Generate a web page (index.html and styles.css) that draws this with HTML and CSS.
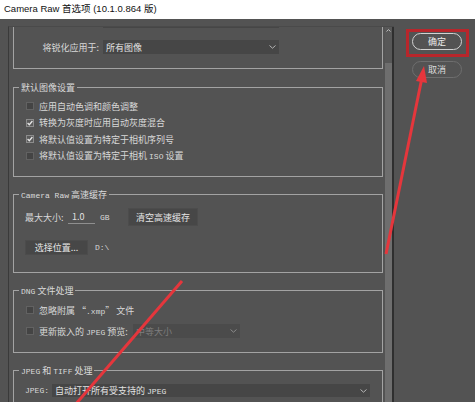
FILE: index.html
```html
<!DOCTYPE html>
<html lang="zh-CN">
<head>
<meta charset="utf-8">
<title>Camera Raw 首选项</title>
<link rel="stylesheet" href="styles.css">
</head>
<body>
<div class="app">
  <div class="titlebar">Camera Raw 首选项 (10.1.0.864 版)</div>
  <div class="window">
    <div class="panel">
      <div class="viewport">
        <div class="content">
          <div class="group g1">
            <div class="frow">
              <span class="flabel">将图像设置存储在:</span>
              <div class="select w176"><span>附属 “<span class="m">.xmp</span>” 文件</span><svg class="chev" width="7" height="4" viewBox="0 0 7 4"><path d="M0.5 0.5 L3.5 3.2 L6.5 0.5"/></svg></div>
            </div>
            <div class="frow gap12">
              <span class="flabel">将锐化应用于:</span>
              <div class="select w176"><span>所有图像</span><svg class="chev" width="7" height="4" viewBox="0 0 7 4"><path d="M0.5 0.5 L3.5 3.2 L6.5 0.5"/></svg></div>
            </div>
          </div>

          <fieldset class="group fs">
            <legend>默认图像设置</legend>
            <div class="checks">
              <div class="check"><span class="box"></span><span>应用自动色调和颜色调整</span></div>
              <div class="check"><span class="box on"><svg width="6" height="6" viewBox="0 0 6 6"><path d="M0.6 3 L2.3 4.7 L5.4 1"/></svg></span><span>转换为灰度时应用自动灰度混合</span></div>
              <div class="check"><span class="box on"><svg width="6" height="6" viewBox="0 0 6 6"><path d="M0.6 3 L2.3 4.7 L5.4 1"/></svg></span><span>将默认值设置为特定于相机序列号</span></div>
              <div class="check"><span class="box"></span><span>将默认值设置为特定于相机 <span class="m">ISO</span> 设置</span></div>
            </div>
          </fieldset>

          <fieldset class="group fs">
            <legend><span class="m">Camera Raw</span> 高速缓存</legend>
            <div class="cache">
              <div class="crow">
                <span class="clabel">最大大小:</span>
                <span class="input">1.0</span>
                <span class="unit m">GB</span>
                <span class="pbtn w70">清空高速缓存</span>
              </div>
              <div class="crow second">
                <span class="pbtn w63">选择位置...</span>
                <span class="path m">D:\</span>
              </div>
            </div>
          </fieldset>

          <fieldset class="group fs">
            <legend><span class="m">DNG</span> 文件处理</legend>
            <div class="dng">
              <div class="check r16"><span class="box"></span><span>忽略附属 “<span class="m">.xmp</span>” 文件</span></div>
              <div class="check r16 gap5"><span class="box"></span><span class="dlabel">更新嵌入的 <span class="m">JPEG</span> 预览:</span>
                <div class="select w107 disabled"><span>中等大小</span><svg class="chev" width="7" height="4" viewBox="0 0 7 4"><path d="M0.5 0.5 L3.5 3.2 L6.5 0.5"/></svg></div>
              </div>
            </div>
          </fieldset>

          <fieldset class="group fs">
            <legend><span class="m">JPEG</span> 和 <span class="m">TIFF</span> 处理</legend>
            <div class="jpeg">
              <div class="jrow">
                <span class="jlabel m">JPEG:</span>
                <div class="select w318 short"><span>自动打开所有受支持的 <span class="m">JPEG</span></span><svg class="chev" width="7" height="4" viewBox="0 0 7 4"><path d="M0.5 0.5 L3.5 3.2 L6.5 0.5"/></svg></div>
              </div>
            </div>
          </fieldset>
        </div>
      </div>
      <div class="scrollbar">
        <div class="sb-up"><svg width="5" height="3" viewBox="0 0 5 3"><path d="M0.5 2.5 L2.5 0.6 L4.5 2.5"/></svg></div>
        <div class="sb-thumb"></div>
      </div>
    </div>
    <div class="side">
      <button class="btn primary">确定</button>
      <button class="btn secondary">取消</button>
    </div>
  </div>
  <svg class="annot" width="475" height="402" viewBox="0 0 475 402">
    <rect x="407.5" y="30.5" width="60" height="25" fill="none" stroke="#b8262b" stroke-width="3"/>
    <line x1="386" y1="254" x2="421.5" y2="80" stroke="#e5363c" stroke-width="3"/>
    <polygon points="424,66 416,81 427,83" fill="#e5363c"/>
    <line x1="75" y1="405" x2="182" y2="281" stroke="#e5363c" stroke-width="3"/>
  </svg>
</div>
</body>
</html>
```

FILE: styles.css
```css
* { box-sizing: border-box; }

body {
  margin: 0;
  background: #ffffff;
  font-family: "Noto Sans CJK SC", sans-serif;
}

.app {
  position: relative;
  width: 475px;
  height: 402px;
  overflow: hidden;
}

.titlebar {
  height: 19px;
  padding-left: 4px;
  background: #ffffff;
  color: #111111;
  font-family: "Liberation Sans", "Noto Sans CJK SC", sans-serif;
  font-size: 9.5px;
  line-height: 17px;
  white-space: nowrap;
}

.window {
  display: flex;
  height: 383px;
  background: #535353;
}

.panel {
  display: flex;
  margin: 7px 0 0 8px;
  border-left: 1px solid #3a3a3a;
  border-top: 1px solid #4a4a4a;
  height: 376px;
}

.viewport {
  width: 376px;
  height: 100%;
  overflow: hidden;
  color: #d8d8d8;
  font-size: 9px;
}

.content {
  padding: 0 2px 0 4px;
}

.m {
  font-family: "Liberation Mono", monospace;
  font-size: 8px;
}

.group {
  border: 1px solid #a3a3a3;
}

/* first group, scrolled partly out of view */
.g1 {
  margin-top: -20px;
  padding: 6px 0 14px;
}

.frow {
  display: flex;
  align-items: center;
  height: 14px;
}

.frow.gap12 { margin-top: 12px; }

.flabel {
  width: 85px;
  margin-right: 4px;
  text-align: right;
  white-space: nowrap;
}

.select {
  display: flex;
  align-items: center;
  justify-content: space-between;
  height: 14px;
  padding: 0 3px 0 3px;
  background: #464646;
  color: #e2e2e2;
  white-space: nowrap;
}

.select.w176 { width: 176px; }
.select.w107 { width: 107px; }
.select.w318 { width: 318px; }
.select.short { height: 13px; }
.select.disabled { background: #4b4b4b; color: #7d7d7d; }

.chev path {
  fill: none;
  stroke: #b5b5b5;
  stroke-width: 1;
}

.select.disabled .chev path { stroke: #8a8a8a; }

/* fieldsets */
.fs {
  margin: 12px 0 0;
  padding: 0;
  min-width: 0;
}

.fs legend {
  margin-left: 5px;
  padding: 0 2px;
  height: 13px;
  line-height: 13px;
  font-size: 9px;
  color: #dadada;
  white-space: nowrap;
}

.fs + .fs { margin-top: 11px; }

.checks {
  padding: 4px 0 12px 12px;
}

.check {
  display: flex;
  align-items: center;
  gap: 5px;
  height: 16.5px;
  white-space: nowrap;
}

.check.r16 { height: 16px; }
.check.gap5 { margin-top: 5px; }

.box {
  display: flex;
  align-items: center;
  justify-content: center;
  flex: none;
  width: 8px;
  height: 8px;
  border: 1px solid #626262;
  background: #444444;
}

.box.on {
  background: #5a5a5a;
  border-color: #8c8c8c;
}

.box svg path {
  fill: none;
  stroke: #e8e8e8;
  stroke-width: 1.3;
}

/* cache group */
.cache {
  padding: 7px 0 17px 11px;
}

.crow {
  display: flex;
  align-items: center;
  height: 18px;
  white-space: nowrap;
}

.crow.second {
  height: 15px;
  margin-top: 14px;
}

.clabel { width: 43px; }

.input {
  width: 27px;
  height: 13px;
  padding-left: 4px;
  line-height: 12px;
  border-bottom: 1px solid #8f8f8f;
  color: #e0e0e0;
}

.unit {
  width: 33px;
  padding-left: 5px;
}

.pbtn {
  display: flex;
  align-items: center;
  justify-content: center;
  height: 100%;
  background: #474747;
  border: 1px solid #4c4c4c;
  color: #e4e4e4;
}

.pbtn.w70 { width: 70px; }
.pbtn.w63 { width: 63px; }

.path { margin-left: 7px; }

/* dng group */
.dng {
  padding: 5px 0 13px 12px;
}

.dlabel { width: 89px; }

/* jpeg group */
.jpeg {
  padding: 7px 0 30px 11px;
}

.jrow {
  display: flex;
  align-items: center;
  height: 13px;
  white-space: nowrap;
}

.jlabel { width: 27px; }

/* scrollbar */
.scrollbar {
  display: flex;
  flex-direction: column;
  width: 9px;
  height: 100%;
  background: #575757;
  border-right: 2px solid #2f2f2f;
}

.sb-up {
  display: flex;
  justify-content: center;
  height: 36px;
  padding-top: 2px;
}

.sb-up path {
  fill: none;
  stroke: #bdbdbd;
  stroke-width: 1;
}

.sb-thumb {
  flex: 1;
  background: #6e6e6e;
}

/* side buttons */
.side {
  display: flex;
  flex-direction: column;
  align-items: flex-start;
  gap: 11px;
  padding: 14px 0 0 18px;
}

.btn {
  width: 50px;
  height: 17px;
  padding: 0;
  border-radius: 9px;
  background: #535353;
  color: #ececec;
  font-family: "Noto Sans CJK SC", sans-serif;
  font-size: 9px;
  line-height: 14px;
}

.btn.primary { border: 1.5px solid #d2d2d2; }
.btn.secondary { border: 1px solid #6e6e6e; color: #dcdcdc; }

/* red annotations drawn over the screenshot */
.annot {
  position: absolute;
  left: 0;
  top: 0;
  pointer-events: none;
}
```
